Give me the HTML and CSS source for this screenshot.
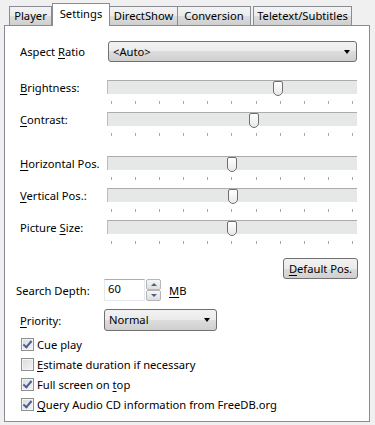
FILE: index.html
```html
<!DOCTYPE html>
<html lang="en">
<head>
    <meta charset="UTF-8">
    <meta name="viewport" content="width=device-width, initial-scale=1.0">
    <title>Options - Settings</title>
    <link rel="stylesheet" href="styles.css">
</head>
<body>

    <div class="tabs">
        <div class="tab tab-player">Player</div>
        <div class="tab tab-settings active">Settings</div>
        <div class="tab tab-ds">DirectShow</div>
        <div class="tab tab-conv">Conversion</div>
        <div class="tab tab-tt">Teletext/Subtitles</div>
    </div>

    <div class="panel">

        <div class="row aspect">
            <span class="lbl">Aspect <u>R</u>atio</span>
            <div class="combo combo-wide">&lt;Auto&gt;<span class="arrow"></span></div>
        </div>

        <div class="sliders first">
            <div class="slider-row">
                <span class="lbl"><u>B</u>rightness:</span>
                <div class="slider">
                    <div class="track"><span class="thumb" style="--v:0.69"></span></div>
                    <div class="ticks"><i></i><i></i><i></i><i></i><i></i><i></i><i></i><i></i><i></i><i></i><i></i></div>
                </div>
            </div>
            <div class="slider-row">
                <span class="lbl"><u>C</u>ontrast:</span>
                <div class="slider">
                    <div class="track"><span class="thumb" style="--v:0.59"></span></div>
                    <div class="ticks"><i></i><i></i><i></i><i></i><i></i><i></i><i></i><i></i><i></i><i></i><i></i></div>
                </div>
            </div>
        </div>

        <div class="sliders second">
            <div class="slider-row">
                <span class="lbl"><u>H</u>orizontal Pos.</span>
                <div class="slider">
                    <div class="track"><span class="thumb" style="--v:0.5"></span></div>
                    <div class="ticks"><i></i><i></i><i></i><i></i><i></i><i></i><i></i><i></i><i></i><i></i><i></i></div>
                </div>
            </div>
            <div class="slider-row">
                <span class="lbl"><u>V</u>ertical Pos.:</span>
                <div class="slider">
                    <div class="track"><span class="thumb" style="--v:0.505"></span></div>
                    <div class="ticks"><i></i><i></i><i></i><i></i><i></i><i></i><i></i><i></i><i></i><i></i><i></i></div>
                </div>
            </div>
            <div class="slider-row">
                <span class="lbl">Picture <u>S</u>ize:</span>
                <div class="slider">
                    <div class="track"><span class="thumb" style="--v:0.5"></span></div>
                    <div class="ticks"><i></i><i></i><i></i><i></i><i></i><i></i><i></i><i></i><i></i><i></i><i></i></div>
                </div>
            </div>
        </div>

        <div class="btn-row">
            <button class="btn"><u>D</u>efault Pos.</button>
        </div>

        <div class="row depth">
            <span class="lbl">Search Depth:</span>
            <div class="spin">
                <div class="edit">60</div>
                <div class="spin-btns">
                    <span class="spin-btn up"></span>
                    <span class="spin-btn down"></span>
                </div>
            </div>
            <span class="unit"><u>M</u>B</span>
        </div>

        <div class="row priority">
            <span class="lbl"><u>P</u>riority:</span>
            <div class="combo combo-small">Normal<span class="arrow"></span></div>
        </div>

        <div class="checks">
            <div class="check"><span class="box on"></span>Cue play</div>
            <div class="check"><span class="box"></span><span><u>E</u>stimate duration if necessary</span></div>
            <div class="check"><span class="box on"></span><span>Full screen on <u>t</u>op</span></div>
            <div class="check"><span class="box on"></span><span><u>Q</u>uery Audio CD information from FreeDB.org</span></div>
        </div>

    </div>

</body>
</html>
```

FILE: styles.css
```css
      body {
          margin: 0;
          background: #f0f0f0;
          color: #000;
          font-family: 'Noto Sans', 'Segoe UI', sans-serif;
          font-size: 11.2px;
          width: 375px;
          height: 425px;
          overflow: hidden;
      }
      u {
          text-decoration: underline;
          text-underline-offset: 2px;
      }

      /* tab strip */
      .tabs {
          display: flex;
          align-items: flex-end;
          height: 25px;
          padding-left: 9px;
      }
      .tab {
          box-sizing: border-box;
          height: 19px;
          border: 1px solid #898c95;
          border-bottom: none;
          border-left: none;
          background: linear-gradient(#f3f3f3 0%, #ebebeb 50%, #dddddd 50%, #cfcfcf 100%);
          text-align: center;
          line-height: 17px;
      }
      .tab-player {
          width: 43px;
          border-left: 1px solid #898c95;
      }
      .tab-settings { width: 58px; }
      .tab-ds { width: 68px; }
      .tab-conv { width: 73px; }
      .tab-tt {
          width: 99px;
          margin-left: 2px;
          border-left: 1px solid #898c95;
      }
      .tab.active {
          height: 23px;
          margin-bottom: -1px;
          background: #fff;
          border-left: 1px solid #898c95;
          position: relative;
          z-index: 1;
          line-height: 19px;
      }

      /* panel */
      .panel {
          box-sizing: border-box;
          width: 366px;
          height: 397px;
          margin-left: 4px;
          border: 1px solid #898c95;
          background: #fff;
          padding: 15px 11px 0 15px;
      }
      .row {
          display: flex;
          align-items: center;
      }
      .lbl {
          white-space: nowrap;
      }
      .aspect {
          height: 21px;
      }
      .aspect .lbl {
          width: 88px;
          flex: none;
      }

      .combo {
          box-sizing: border-box;
          position: relative;
          height: 21px;
          border: 1px solid #707070;
          border-radius: 3px;
          background: linear-gradient(#f2f2f2 0%, #ebebeb 50%, #dddddd 50%, #cfcfcf 100%);
          padding-left: 4px;
          line-height: 19px;
      }
      .combo-wide {
          width: 249px;
      }
      .combo-small {
          width: 113px;
          height: 22px;
          line-height: 20px;
      }
      .arrow {
          position: absolute;
          right: 6px;
          top: 8px;
          border-top: 4px solid #000;
          border-left: 3.5px solid transparent;
          border-right: 3.5px solid transparent;
      }

      /* sliders */
      .sliders.first {
          margin-top: 18px;
      }
      .sliders.second {
          margin-top: 12px;
      }
      .slider-row {
          display: grid;
          grid-template-columns: 87px 250px;
          height: 32px;
      }
      .slider-row .lbl {
          line-height: 14px;
          padding-top: 1px;
      }
      .track {
          position: relative;
          box-sizing: border-box;
          height: 14px;
          background: #e6e8e8;
          border-top: 1px solid #acacac;
          border-left: 1px solid #bdbdbd;
      }
      .thumb {
          position: absolute;
          top: 0;
          left: calc(3px + 242px * var(--v) - 5px);
          width: 10px;
          height: 15px;
          box-sizing: border-box;
          border: 1px solid #6f6f6f;
          border-radius: 2px 2px 5px 5px;
          background: linear-gradient(#ffffff, #e9e9e9);
      }
      .ticks {
          display: flex;
          justify-content: space-between;
          margin-top: 7px;
          padding: 0 4px 0 4px;
      }
      .ticks i {
          width: 1px;
          height: 3px;
          background: #a8a8a8;
      }

      /* button */
      .btn-row {
          display: flex;
          justify-content: flex-end;
          margin-top: 6px;
      }
      .btn {
          box-sizing: border-box;
          width: 75px;
          height: 21px;
          border: 1px solid #707070;
          border-radius: 3px;
          background: linear-gradient(#f2f2f2 0%, #ebebeb 50%, #dddddd 50%, #cfcfcf 100%);
          font: inherit;
          color: #000;
          padding: 0;
      }

      /* search depth */
      .depth {
          height: 22px;
          margin-left: -4px;
      }
      .depth .lbl {
          width: 88px;
          flex: none;
      }
      .spin {
          display: flex;
      }
      .edit {
          box-sizing: border-box;
          width: 41px;
          height: 22px;
          border: 1px solid #e3e9ef;
          border-top-color: #abadb3;
          padding: 2px 0 0 3px;
          line-height: 14px;
      }
      .spin-btns {
          display: flex;
          flex-direction: column;
          margin-left: 1px;
      }
      .spin-btn {
          position: relative;
          box-sizing: border-box;
          width: 15px;
          height: 11px;
          border: 1px solid #b6b6b6;
          border-radius: 2px;
          background: linear-gradient(#f6f6f6, #dedede);
      }
      .spin-btn::after {
          content: "";
          position: absolute;
          left: 4px;
          top: 3px;
          border-left: 3px solid transparent;
          border-right: 3px solid transparent;
      }
      .spin-btn.up::after {
          border-bottom: 3px solid #4d6185;
      }
      .spin-btn.down::after {
          border-top: 3px solid #4d6185;
      }
      .unit {
          margin-left: 8px;
      }

      /* priority */
      .priority {
          height: 22px;
          margin-top: 8px;
      }
      .priority .lbl {
          width: 84px;
          flex: none;
      }

      /* checkboxes */
      .checks {
          margin-top: 3px;
          margin-left: 1px;
      }
      .check {
          display: flex;
          align-items: center;
          height: 20px;
      }
      .box {
          position: relative;
          box-sizing: border-box;
          width: 13px;
          height: 13px;
          margin-right: 3px;
          border: 1px solid #8e8f8f;
          background: linear-gradient(135deg, #d9dadb, #f4f4f4);
          box-shadow: inset 0 0 0 1px #f4f4f4;
          flex: none;
      }
      .box.on::after {
          content: "";
          position: absolute;
          left: 3px;
          top: 0px;
          width: 3px;
          height: 7px;
          border-right: 2px solid #4a5f97;
          border-bottom: 2px solid #4a5f97;
          transform: rotate(40deg);
      }
```
